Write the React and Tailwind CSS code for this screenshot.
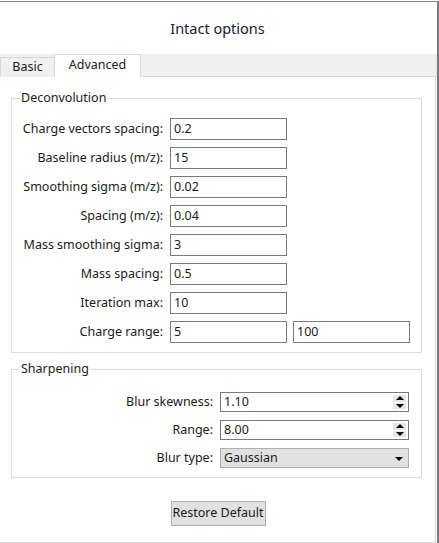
import React from "react";

const font = { fontFamily: '"Noto Sans", "Segoe UI", sans-serif' };

function Row({ label, value, value2 }) {
  return (
    <div className="flex items-center h-[22px]">
      <div className="w-[151px] text-right whitespace-nowrap">{label}</div>
      <div className="ml-[7px] w-[117px] h-[22px] border border-[#7a7a7a] bg-white flex items-center pl-[3px]">{value}</div>
      {value2 && (
        <div className="ml-[6px] w-[117px] h-[22px] border border-[#7a7a7a] bg-white flex items-center pl-[3px]">{value2}</div>
      )}
    </div>
  );
}

function Spinner() {
  return (
    <div className="absolute right-[2px] top-[2px] bottom-[2px] w-[13px] flex flex-col gap-[1px]">
      <div className="flex-1 bg-[#e6e6e6] flex items-center justify-center">
        <div className="w-0 h-0 border-l-[4px] border-r-[4px] border-b-[4px] border-l-transparent border-r-transparent border-b-black" />
      </div>
      <div className="flex-1 bg-[#e6e6e6] flex items-center justify-center">
        <div className="w-0 h-0 border-l-[4px] border-r-[4px] border-t-[4px] border-l-transparent border-r-transparent border-t-black" />
      </div>
    </div>
  );
}

function SRow({ label, children }) {
  return (
    <div className="flex items-center h-[20px]">
      <div className="w-[201px] text-right whitespace-nowrap">{label}</div>
      <div className="ml-[7px]">{children}</div>
    </div>
  );
}

export default function App() {
  return (
    <div className="w-[439px] h-[543px] bg-white text-[12.5px] text-[#1a1a1a] relative overflow-hidden" style={font}>
      <div className="h-[1px] bg-white" />
      <div className="flex h-[542px]">
        <div className="flex-1 flex flex-col border-t border-[#8c8c8c]">
          <div className="h-[52px] flex items-center justify-center pr-[2px]">
            <span className="text-[14.5px] text-[#1b1b2f] mt-[1px]">Intact options</span>
          </div>
          <div className="h-[23px] bg-[#f0f0f0] flex items-end relative border-r border-[#e3e3e3]">
            <div className="absolute left-0 right-0 bottom-0 h-[1px] bg-[#d9d9d9]" />
            <div className="relative h-[20px] w-[55px] border border-b-0 border-[#d9d9d9] bg-[#f0f0f0] flex items-center justify-center">
              Basic
            </div>
            <div className="relative h-[23px] w-[87px] -ml-[1px] border border-b-0 border-[#d9d9d9] bg-white flex items-center justify-center pb-[1px] z-10">
              Advanced
            </div>
          </div>
          <div className="flex-1 flex">
            <div className="flex-1 border-r border-b border-[#d9d9d9] flex flex-col px-[11px] pt-[21px]">
              <div className="relative border border-[#dcdcdc] w-[411px] pt-[19px] pb-[9px] flex flex-col gap-[7px]">
                <div className="absolute left-[8px] -top-[10px] bg-white px-[1px] leading-[18px]">Deconvolution</div>
                <Row label="Charge vectors spacing:" value="0.2" />
                <Row label="Baseline radius (m/z):" value="15" />
                <Row label="Smoothing sigma (m/z):" value="0.02" />
                <Row label="Spacing (m/z):" value="0.04" />
                <Row label="Mass smoothing sigma:" value="3" />
                <Row label="Mass spacing:" value="0.5" />
                <Row label="Iteration max:" value="10" />
                <Row label="Charge range:" value="5" value2="100" />
              </div>
              <div className="relative border border-[#dcdcdc] w-[411px] mt-[16px] pt-[22px] pb-[9px] flex flex-col gap-[8px]">
                <div className="absolute left-[8px] -top-[10px] bg-white px-[1px] leading-[18px]">Sharpening</div>
                <SRow label="Blur skewness:">
                  <div className="relative w-[189px] h-[20px] border border-[#7a7a7a] bg-white flex items-center pl-[3px]">
                    1.10
                    <Spinner />
                  </div>
                </SRow>
                <SRow label="Range:">
                  <div className="relative w-[189px] h-[20px] border border-[#7a7a7a] bg-white flex items-center pl-[3px]">
                    8.00
                    <Spinner />
                  </div>
                </SRow>
                <SRow label="Blur type:">
                  <div className="relative w-[189px] h-[20px] border border-[#adadad] bg-[#e1e1e1] flex items-center pl-[3px]">
                    Gaussian
                    <div className="absolute right-[5px] top-[8px] w-0 h-0 border-l-[4px] border-r-[4px] border-t-[4px] border-l-transparent border-r-transparent border-t-black" />
                  </div>
                </SRow>
              </div>
              <div className="flex justify-center mt-[23px] pl-[1px]">
                <div className="w-[95px] h-[25px] border border-[#adadad] bg-[#e1e1e1] flex items-center justify-center">
                  Restore Default
                </div>
              </div>
            </div>
            <div className="w-[1px] bg-white" />
          </div>
        </div>
        <div className="w-[2px] bg-[#7a7a84]" />
      </div>
    </div>
  );
}
